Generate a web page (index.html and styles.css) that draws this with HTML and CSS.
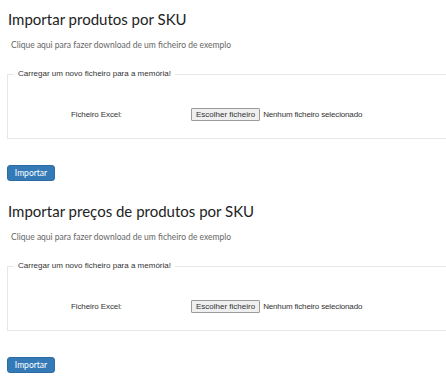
FILE: index.html
```html
<!DOCTYPE html>
<html lang="pt">
<head>
<meta charset="utf-8">
<title>Importar</title>
<link rel="stylesheet" href="styles.css">
</head>
<body>
<div class="page">
  <section class="import">
    <h1 class="title">Importar produtos por SKU</h1>
    <p class="example"><a href="#">Clique aqui para fazer download de um ficheiro de exemplo</a></p>
    <fieldset class="box">
      <legend>Carregar um novo ficheiro para a memória!</legend>
      <div class="row">
        <span class="label">Ficheiro Excel:</span>
        <span class="file"><span class="file-btn">Escolher ficheiro</span><span class="file-text">Nenhum ficheiro selecionado</span></span>
      </div>
    </fieldset>
    <button class="btn" type="button">Importar</button>
  </section>
  <section class="import">
    <h1 class="title">Importar preços de produtos por SKU</h1>
    <p class="example"><a href="#">Clique aqui para fazer download de um ficheiro de exemplo</a></p>
    <fieldset class="box">
      <legend>Carregar um novo ficheiro para a memória!</legend>
      <div class="row">
        <span class="label">Ficheiro Excel:</span>
        <span class="file"><span class="file-btn">Escolher ficheiro</span><span class="file-text">Nenhum ficheiro selecionado</span></span>
      </div>
    </fieldset>
    <button class="btn" type="button">Importar</button>
  </section>
</div>
</body>
</html>
```
FILE: styles.css
```css
html, body {
  margin: 0;
  padding: 0;
  background: #fff;
  overflow: hidden;
}
body {
  font-family: Lato, "Open Sans", sans-serif;
  color: #333;
}
.page {
  padding: 0 0 0 7px;
}
.import {
  padding-top: 9px;
}
.import + .import {
  padding-top: 20px;
}
.title {
  margin: 0 0 0 1px;
  font-size: 15px;
  line-height: 20px;
  font-weight: 400;
  color: #222;
}
.example {
  margin: 10px 0 0 4px;
  font-size: 8.5px;
  line-height: 12px;
}
.example a {
  color: #666;
  text-decoration: none;
}
.box {
  margin: 17px 0 0 0;
  padding: 28px 0 17px 0;
  border: 1px solid #e6e6e6;
  border-right: 0;
  min-width: 0;
}
.box legend {
  margin-left: 6px;
  padding: 0 4px;
  font-family: "Liberation Sans", Arial, sans-serif;
  font-size: 8px;
  line-height: 12px;
  color: #333;
}
.row {
  display: flex;
  align-items: center;
  height: 13px;
  font-family: "Liberation Sans", Arial, sans-serif;
  font-size: 8px;
  color: #333;
}
.label {
  width: 120px;
  padding-left: 63px;
  letter-spacing: -0.1px;
}
.file {
  display: flex;
  align-items: center;
}
.file-btn {
  box-sizing: border-box;
  height: 13px;
  padding: 0 4px;
  line-height: 11px;
  background: #efefef;
  border: 1px solid #9a9a9a;
  border-radius: 1px;
  color: #333;
}
.file-text {
  margin-left: 3px;
  letter-spacing: -0.15px;
}
.btn {
  display: block;
  margin-top: 26px;
  width: 48px;
  height: 16px;
  padding: 0;
  border: 1px solid #2e6da4;
  border-radius: 3px;
  background: #337ab7;
  color: #fff;
  font-family: Lato, "Open Sans", sans-serif;
  font-size: 8.5px;
  line-height: 14px;
}
```
